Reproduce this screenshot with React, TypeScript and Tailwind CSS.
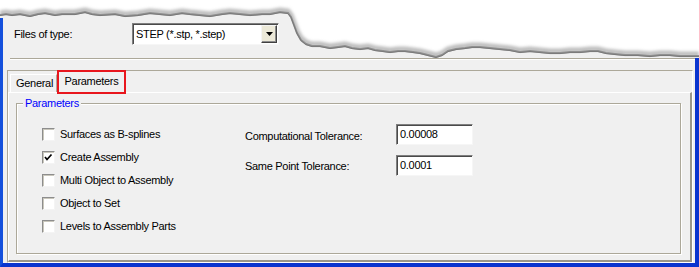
import React from "react";

const edge: [number, number][] = [
  [0, 15], [6, 14], [12, 15], [20, 14], [30, 16], [38, 14], [45, 13], [55, 15], [62, 14],
  [75, 14], [85, 12], [92, 14], [100, 15], [115, 14], [125, 16], [138, 15], [150, 13],
  [160, 14], [170, 15], [182, 13], [190, 14], [200, 15], [210, 16], [222, 14], [230, 13],
  [240, 14], [250, 15], [262, 14], [270, 14], [280, 12], [288, 13], [291, 17], [294, 25],
  [297, 33], [301, 40], [306, 44], [312, 46], [320, 46], [330, 48], [338, 47], [345, 46],
  [352, 48], [360, 49], [368, 48], [375, 50], [383, 51], [390, 52], [398, 51], [405, 51],
  [413, 52], [420, 53], [428, 55], [436, 57], [442, 55], [448, 51], [456, 49], [465, 48],
  [472, 47], [480, 47], [490, 48], [500, 49], [510, 50], [520, 52], [530, 51], [540, 52],
  [550, 53], [560, 53], [570, 52], [580, 52], [590, 51], [598, 51], [606, 53], [615, 54],
  [625, 55], [638, 55], [650, 56], [660, 55], [670, 55], [680, 56], [690, 56], [699, 56],
];

const pts = edge.map(([x, y]) => `${x},${y}`).join(" ");

const TornEdge = () => (
  <svg className="absolute left-0 top-0" width="699" height="60" viewBox="0 0 699 60">
    <defs>
      <filter id="blur" x="-5%" y="-50%" width="110%" height="200%">
        <feGaussianBlur stdDeviation="1.8" />
      </filter>
    </defs>
    <polyline points={pts} fill="none" stroke="#bdbdbd" strokeWidth="5" transform="translate(0,-2)" filter="url(#blur)" />
    <polygon points={`${pts} 699,60 0,60`} fill="#f0f0f0" />
    <polyline points={pts} fill="none" stroke="#909090" strokeWidth="2" />
    <polyline points={pts} fill="none" stroke="#727272" strokeWidth="0.8" transform="translate(0,0.6)" />
    <rect x="0" y="18" width="3" height="42" fill="#1450dc" />
  </svg>
);

const Checkbox = ({ checked }: { checked?: boolean }) => (
  <span className="w-[13px] h-[13px] shrink-0 bg-white border border-t-[#8d8d8d] border-l-[#8d8d8d] border-r-[#f4f4f4] border-b-[#f4f4f4] shadow-[inset_1px_1px_0_#c9c7bc] flex items-center justify-center">
    {checked && (
      <svg width="11" height="11" viewBox="0 0 11 11">
        <polyline points="2,5 4,7.5 8.5,2.5" fill="none" stroke="#000" strokeWidth="1.7" />
      </svg>
    )}
  </span>
);

const Field = ({ value }: { value: string }) => (
  <div className="w-[77px] h-[21px] bg-white border border-t-[#7f7f7f] border-l-[#7f7f7f] border-r-[#f6f6f6] border-b-[#f6f6f6] shadow-[inset_1px_1px_0_#4a4a4a] flex items-center pl-[3px]">
    {value}
  </div>
);

const options = [
  { label: "Surfaces as B-splines" },
  { label: "Create Assembly", checked: true },
  { label: "Multi Object to Assembly" },
  { label: "Object to Set" },
  { label: "Levels to Assembly Parts" },
];

export default function App() {
  return (
    <div className="relative w-[699px] h-[267px] bg-white overflow-hidden text-[11px] tracking-[-0.3px] leading-[13px] text-black font-['Liberation_Sans',Arial,sans-serif]">
      <TornEdge />
      <div className="relative flex flex-col h-full">
        {/* file type row */}
        <div className="h-[58px] flex items-start pt-[23px] pl-[14px]">
          <div className="h-[22px] w-[118px] flex items-center">Files of type:</div>
          <div className="w-[147px] h-[22px] bg-white border border-t-[#7f7f7f] border-l-[#7f7f7f] border-r-[#f6f6f6] border-b-[#f6f6f6] shadow-[inset_1px_1px_0_#4a4a4a] flex items-center pl-[3px] pr-[1px]">
            <span className="flex-1">STEP (*.stp, *.step)</span>
            <div className="w-[16px] h-[18px] bg-[#ece9d8] border border-t-[#f4f4f4] border-l-[#f4f4f4] border-r-[#404040] border-b-[#404040] shadow-[inset_-1px_-1px_0_#8c8c8c] flex items-center justify-center">
              <svg width="7" height="4" viewBox="0 0 7 4">
                <polygon points="0,0 7,0 3.5,4" fill="#000" />
              </svg>
            </div>
          </div>
        </div>

        {/* dialog body */}
        <div className="flex-1 flex flex-col bg-[#f0f0f0] border-l-[3px] border-l-[#1450dc] border-r-4 border-r-[#0a35cf] border-b-4 border-b-[#0a35cf]">
          <div className="ml-[7px] h-[2px] border-t border-t-[#aca899] border-b border-b-white" />

          <div className="flex-1 mt-[10px] ml-[4px] mr-[2px] flex flex-col border border-t-[#aca899] border-l-[#aca899] border-r-white border-b-white">
            {/* tabs */}
            <div className="h-[21px] flex items-end pl-[2px]">
              <div className="h-[18px] w-[47px] border-t border-l border-white border-r border-r-[#aca899] flex items-center pl-[5px]">
                General
              </div>
              <div className="relative h-[22px] -mb-px w-[69px] bg-[#f0f0f0] border-t border-l border-white border-r border-r-[#aca899] flex items-center justify-center pb-[2px]">
                Parameters
                <div className="absolute -left-[1px] -top-[2px] w-[69px] h-[24px] border-2 border-[#e8161d]" />
              </div>
            </div>

            {/* tab page */}
            <div className="flex-1 flex flex-col border-t border-l border-white border-r-2 border-r-[#9a9789] border-b-2 border-b-[#9a9789]">
              <div className="flex-1 flex flex-col mt-[10px] ml-[7px] mr-[9px] mb-[6px] border border-[#aca899] shadow-[inset_1px_1px_0_white,1px_1px_0_white]">
                <div className="-mt-[7px] ml-[6px] px-[2px] w-fit bg-[#f0f0f0] text-[#0000ff]">Parameters</div>
                <div className="flex pt-[13px] pl-[25px]">
                  <div className="w-[203px] flex flex-col">
                    {options.map((o) => (
                      <div key={o.label} className="h-[23px] flex items-center gap-[5px]">
                        <Checkbox checked={o.checked} />
                        <span>{o.label}</span>
                      </div>
                    ))}
                  </div>
                  <div className="flex flex-col gap-[10px] pt-[1px]">
                    <div className="h-[21px] flex items-center">
                      <span className="w-[151px] pt-[3px]">Computational Tolerance:</span>
                      <Field value="0.00008" />
                    </div>
                    <div className="h-[21px] flex items-center">
                      <span className="w-[151px] pt-[1px]">Same Point Tolerance:</span>
                      <Field value="0.0001" />
                    </div>
                  </div>
                </div>
              </div>
            </div>
          </div>
        </div>
      </div>
    </div>
  );
}
